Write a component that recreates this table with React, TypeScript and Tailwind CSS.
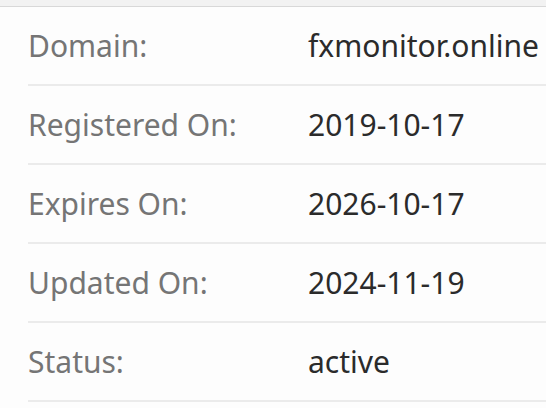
const rows = [
  { label: 'Domain:', value: 'fxmonitor.online' },
  { label: 'Registered On:', value: '2019-10-17' },
  { label: 'Expires On:', value: '2026-10-17' },
  { label: 'Updated On:', value: '2024-11-19' },
  { label: 'Status:', value: 'active' },
];

export default function App() {
  return (
    <div className="w-[546px] h-[408px] overflow-hidden bg-[#fdfdfd] font-['Noto_Sans',sans-serif]">
      <div className="h-[7px] bg-[#f2f2f2] border-b border-[#d8d8d8]" />
      <div className="pl-[28px]">
        {rows.map((r) => (
          <div
            key={r.label}
            className="flex items-center h-[79px] border-b-2 border-[#ebebeb]"
          >
            <div className="w-[280px] shrink-0 text-[30px] text-[#757575]">{r.label}</div>
            <div className="text-[30px] text-[#2b2b2b] whitespace-nowrap">{r.value}</div>
          </div>
        ))}
      </div>
    </div>
  );
}
